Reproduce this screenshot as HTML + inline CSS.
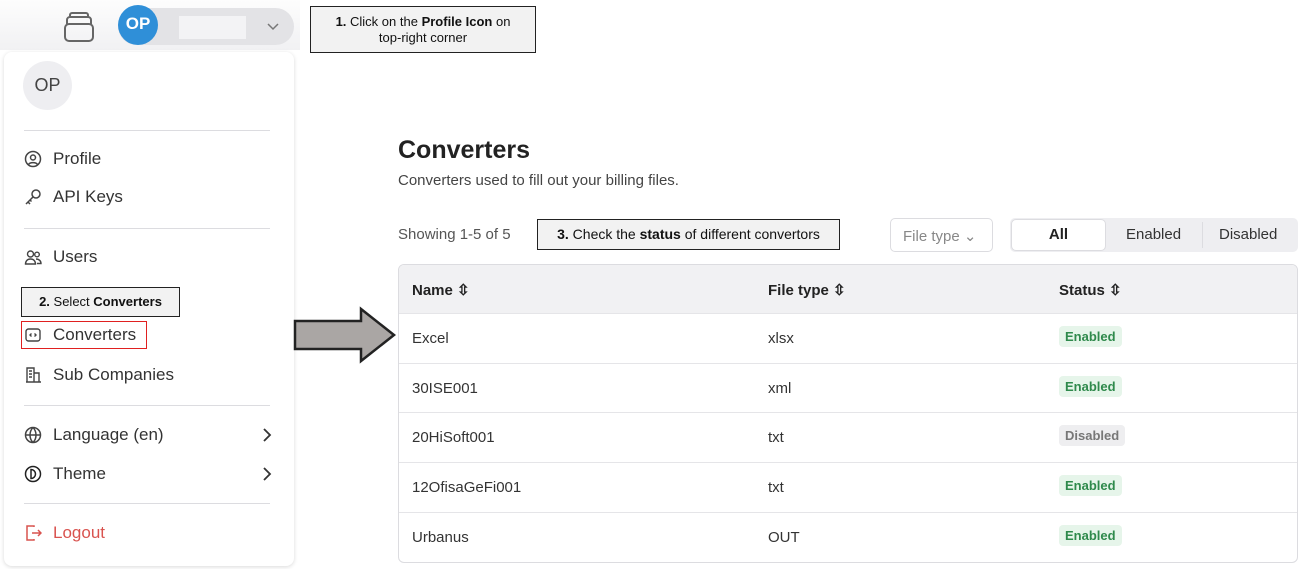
<!DOCTYPE html>
<html><head><meta charset="utf-8"><style>
*{box-sizing:border-box;margin:0;padding:0}
body{width:1304px;height:569px;background:#fff;font-family:"Liberation Sans",sans-serif;position:relative;overflow:hidden;color:#222}
.a{position:absolute}
.call{position:absolute;background:#f2f2f2;border:1px solid #222;font-size:13px;color:#111;text-align:center;line-height:16px}
.mi{position:absolute;left:24px;font-size:17px;color:#333;display:flex;align-items:center}
.mi svg{width:18px;height:18px;margin-right:11px}
.hr{position:absolute;left:24px;width:246px;height:1px;background:#dcdce0}
.row{position:absolute;left:399px;width:898px;height:50px;border-top:1px solid #e5e5e8;font-size:15px;color:#333}
.row span{position:absolute;top:16px}
.b{position:absolute;top:12px;left:660px;font-size:13px;padding:3px 6px;border-radius:4px;background:#e6f5ea;color:#2f8a4c;font-weight:bold}
.b.d{background:#eeeef0;color:#777}
</style></head><body>
<div class="a" style="left:0;top:0;width:300px;height:50px;background:linear-gradient(#fdfdfd,#f1f1f3)"></div>
<svg class="a" style="left:62px;top:11px" width="34" height="32" viewBox="0 0 34 32" fill="none" stroke="#666" stroke-width="2"><rect x="3" y="13" width="28" height="17" rx="4"/><path d="M5 13V9a3 3 0 0 1 3-3h18a3 3 0 0 1 3 3v4M8 6V4a2 2 0 0 1 2-2h14a2 2 0 0 1 2 2v2"/></svg>
<div class="a" style="left:118px;top:8px;width:176px;height:37px;border-radius:19px;background:#e3e3e6"></div>
<div class="a" style="left:118px;top:5px;width:40px;height:40px;border-radius:50%;background:#2f8fd8;color:#fff;font-weight:bold;font-size:17px;text-align:center;line-height:38px">OP</div>
<div class="a" style="left:179px;top:16px;width:67px;height:23px;background:#f3f3f5"></div>
<svg class="a" style="left:267px;top:23px" width="12" height="8"><path d="M1 1l5 5 5-5" stroke="#777" fill="none" stroke-width="1.5"/></svg>
<div class="a" style="left:4px;top:52px;width:290px;height:514px;background:#fff;border-radius:8px;box-shadow:0 1px 4px rgba(0,0,0,.15)"></div>
<div class="a" style="left:23px;top:61px;width:49px;height:49px;border-radius:50%;background:#eeeef1;font-size:18px;color:#444;text-align:center;line-height:49px">OP</div>
<div class="hr" style="top:130px"></div>
<div class="mi" style="top:149px"><svg viewBox="0 0 18 18" fill="none" stroke="#444" stroke-width="1.5"><circle cx="9" cy="9" r="7.5"/><circle cx="9" cy="7.5" r="2.5"/><path d="M4.5 14.5c1.5-2.5 7.5-2.5 9 0"/></svg>Profile</div>
<div class="mi" style="top:187px"><svg viewBox="0 0 18 18" fill="none" stroke="#444" stroke-width="1.5"><circle cx="12" cy="6" r="4"/><path d="M9 9l-7 7M4 14l2 2M6 12l1.5 1.5"/></svg>API Keys</div>
<div class="hr" style="top:228px"></div>
<div class="mi" style="top:247px"><svg viewBox="0 0 18 18" fill="none" stroke="#444" stroke-width="1.4"><circle cx="6.5" cy="6" r="3"/><circle cx="13" cy="6.5" r="2.3"/><path d="M1.5 16c0-3 2-5 5-5s5 2 5 5zM12 11c3 0 5 2 5 4.5h-4"/></svg>Users</div>
<div class="call" style="left:21px;top:287px;width:159px;height:30px;line-height:28px"><b>2.</b> Select <b>Converters</b></div>
<div class="a" style="left:21px;top:321px;width:126px;height:28px;border:1px solid #e02020"></div>
<div class="mi" style="top:325px"><svg viewBox="0 0 18 18" fill="none" stroke="#444" stroke-width="1.4"><rect x="2" y="3" width="14" height="12" rx="2.5"/><path d="M7.5 7.5L6 9l1.5 1.5M10.5 7.5L12 9l-1.5 1.5"/></svg>Converters</div>
<div class="mi" style="top:365px"><svg viewBox="0 0 18 18" fill="none" stroke="#444" stroke-width="1.4"><path d="M2 16h15M3 16V2h7v14M10 7h5v9M5 5h3M5 8h3M5 11h3"/></svg>Sub Companies</div>
<div class="hr" style="top:405px"></div>
<div class="mi" style="top:425px"><svg viewBox="0 0 18 18" fill="none" stroke="#444" stroke-width="1.5"><circle cx="9" cy="9" r="7.5"/><path d="M1.5 9h15M9 1.5c-4 4-4 11 0 15M9 1.5c4 4 4 11 0 15"/></svg>Language (en)</div>
<div class="mi" style="top:464px"><svg viewBox="0 0 18 18" fill="none" stroke="#222" stroke-width="1.5"><circle cx="9" cy="9" r="7.5"/><path d="M7 4.5v9a4.5 4.5 0 0 0 0-9z"/></svg>Theme</div>
<svg class="a" style="left:262px;top:428px" width="10" height="14"><path d="M2 1l6 6-6 6" stroke="#333" fill="none" stroke-width="1.8"/></svg>
<svg class="a" style="left:262px;top:467px" width="10" height="14"><path d="M2 1l6 6-6 6" stroke="#333" fill="none" stroke-width="1.8"/></svg>
<div class="hr" style="top:503px"></div>
<div class="mi" style="top:523px;color:#d9534f"><svg viewBox="0 0 18 18" fill="none" stroke="#d9534f" stroke-width="1.5"><path d="M10 3V2H3v14h7v-1M8 9h9M14 6l3 3-3 3"/></svg>Logout</div>
<div class="call" style="left:310px;top:6px;width:226px;height:47px;padding-top:7px"><b>1.</b> Click on the <b>Profile Icon</b> on<br>top-right corner</div>
<svg class="a" style="left:293px;top:306px" width="105" height="58"><path d="M2 15h66V3l33 26-33 26V43H2z" fill="#aaa6a4" stroke="#222" stroke-width="2.5"/></svg>
<div class="a" style="left:398px;top:136px;font-size:25px;font-weight:bold;color:#222">Converters</div>
<div class="a" style="left:398px;top:172px;font-size:15px;color:#444">Converters used to fill out your billing files.</div>
<div class="a" style="left:398px;top:226px;font-size:15px;color:#555">Showing 1-5 of 5</div>
<div class="call" style="left:537px;top:219px;width:303px;height:31px;line-height:29px;font-size:14px"><b>3.</b> Check the <b>status</b> of different convertors</div>
<div class="a" style="left:890px;top:218px;width:103px;height:34px;border:1px solid #dcdce0;border-radius:5px;font-size:15px;color:#888;padding:8px 12px">File type ⌄</div>
<div class="a" style="left:1010px;top:218px;width:288px;height:34px;background:#eeeef1;border-radius:5px"></div>
<div class="a" style="left:1011px;top:219px;width:95px;height:32px;background:#fff;border-radius:5px;border:1px solid #dcdce0;font-size:15px;font-weight:bold;text-align:center;line-height:30px">All</div>
<div class="a" style="left:1126px;top:226px;font-size:15px;color:#333">Enabled</div>
<div class="a" style="left:1202px;top:222px;width:1px;height:26px;background:#dcdce0"></div>
<div class="a" style="left:1219px;top:226px;font-size:15px;color:#333">Disabled</div>
<div class="a" style="left:398px;top:264px;width:900px;height:299px;border:1px solid #dcdce0;border-radius:6px;overflow:hidden">
<div style="height:49px;background:#f1f1f3"></div></div>
<div class="a" style="left:412px;top:281px;font-size:15px;font-weight:bold">Name ⇳</div>
<div class="a" style="left:768px;top:281px;font-size:15px;font-weight:bold">File type ⇳</div>
<div class="a" style="left:1059px;top:281px;font-size:15px;font-weight:bold">Status ⇳</div>
<div class="row" style="top:313px"><span style="left:13px">Excel</span><span style="left:369px">xlsx</span><div class="b">Enabled</div></div>
<div class="row" style="top:363px"><span style="left:13px">30ISE001</span><span style="left:369px">xml</span><div class="b">Enabled</div></div>
<div class="row" style="top:412px"><span style="left:13px">20HiSoft001</span><span style="left:369px">txt</span><div class="b d">Disabled</div></div>
<div class="row" style="top:462px"><span style="left:13px">12OfisaGeFi001</span><span style="left:369px">txt</span><div class="b">Enabled</div></div>
<div class="row" style="top:512px"><span style="left:13px">Urbanus</span><span style="left:369px">OUT</span><div class="b">Enabled</div></div>
</body></html>
